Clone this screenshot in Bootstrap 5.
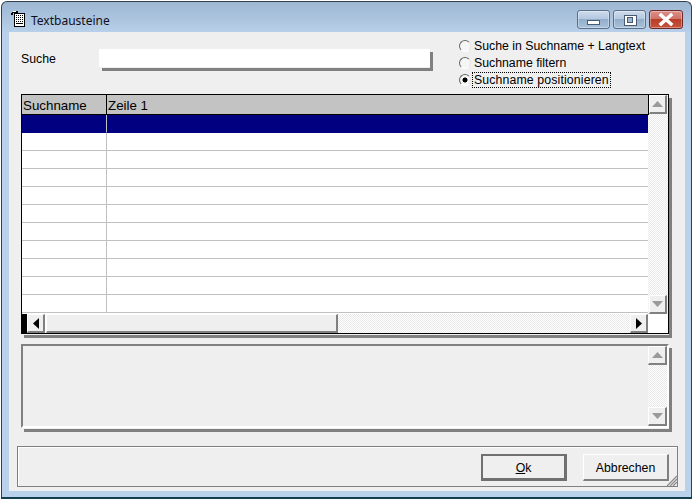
<!DOCTYPE html>
<html lang="de">
<head>
<meta charset="utf-8">
<title>Textbausteine</title>
<link rel="stylesheet" href="https://cdn.jsdelivr.net/npm/bootstrap@5.3.0/dist/css/bootstrap.min.css">
<style>
html,body{margin:0;padding:0;background:#fff;overflow:hidden}
body{width:693px;height:500px;font-family:"Liberation Sans",Arial,sans-serif;font-size:12.3px;color:#000;padding:1px 0 0 1px}
.frame-win{width:691px;height:498px;border:1px solid #33404c;border-bottom:2px solid #123f52;border-radius:6px 6px 0 0;background:linear-gradient(#9db6d2 0,#b9d1ea 32px);padding:0 6px 5px 7px}
.title-bar{height:30px;position:relative}
.title-icon{margin-left:2px;margin-top:8px}
.title-text{font-family:"Noto Sans","Open Sans",sans-serif;font-size:12px;color:#10101c;margin-left:6px;margin-top:9px;line-height:20px}
.ctl{height:19px;border:1px solid #5a6f8a;border-radius:3px;margin-top:8px;background:linear-gradient(#cfdcec 0,#b4c8df 45%,#92aecb 50%,#a9c2db 100%);box-shadow:inset 0 0 0 1px rgba(255,255,255,.35)}
.ctl-min{width:33px;margin-left:3px}
.ctl-max{width:33px;margin-left:3px}
.ctl-close{width:34px;margin-left:3px;margin-right:2px;border-color:#6e2a2a;background:linear-gradient(#dc9087 0,#d0736a 45%,#b93d27 50%,#c4553e 100%)}
.client{width:676px;height:459px;background:#efefef}
.top-row{height:62px}
.lbl-search{width:78px;margin-left:12px;margin-top:18px;line-height:19px}
.search-box{width:331px;height:19px;margin-top:17px;padding:0;background:#fff;border:0;border-bottom:1px solid #efefef;border-radius:0;box-shadow:3px 3px 0 #808080;outline:0}
.radio-set{margin-left:29px;margin-top:5px}
.radio-line{height:17px}
.radio-dot{appearance:none;width:12px;height:12px;margin:0 1px 0 0;border-radius:50%;border:1.5px solid;border-color:#666 #e4e4e4 #fff #666;background:#f6f6f6;flex:none}
.radio-dot:checked{background:radial-gradient(circle,#000 0 2.2px,#f6f6f6 2.8px)}
.radio-text{border:1px dotted transparent;padding:0 1px;line-height:14px;white-space:nowrap;margin:0}
.radio-text.has-focus{border-color:#000;letter-spacing:.13px}
.grid-box{margin-left:12px;width:648px;height:240px;border:1px solid #000;background:#fff;box-shadow:0 1px 0 #efefef,3px 4px 0 #808080}
.grid-main{height:219px}
.grid-table-wrap{width:626px;height:219px;overflow:hidden}
.grid-table{width:626px;table-layout:fixed;font-size:13.33px;border-collapse:separate;border-spacing:0}
.grid-table th{height:20px;background:#c3c3c3;font-weight:400;padding:2px 1px 0;border-bottom:1px solid #000;line-height:17px;white-space:nowrap}
.grid-table th:first-child{width:85px;border-right:1px solid #000}
.grid-table td{height:18px;padding:0;border-bottom:1px solid #c0c0c0}
.grid-table td:first-child{border-right:1px solid #c0c0c0}
.grid-table tr.row-sel td{background:#000080;border-bottom-color:#000080}
.dither{background:repeating-conic-gradient(#fff 0 25%,#e9e9e9 0 50%) 0 0/2px 2px}
.vbar{width:20px}
.vbar-head{border-left:1px solid #000;height:20px;flex:none}
.sb-btn{display:flex;align-items:center;justify-content:center;background:#efefef;border:1px solid;border-color:#fff #808080 #808080 #fff;border-width:1px 2px 2px 1px;flex:none}
.vbtn{width:18px;height:19px}
.vbtn-side{margin-left:1px}
.hbar{height:19px}
.hbar-mark{width:5px;background:#000}
.hbtn{width:18px;height:19px}
.h-thumb{width:292px;height:19px;margin-left:1px;background:#efefef;border:1px solid;border-color:#fff #808080 #808080 #fff;border-width:1px 2px 2px 1px}
.h-corner{width:20px;background:#fff}
.memo-box{margin-left:12px;margin-top:10px;width:648px;height:84px;border:2px solid;border-color:#808080 #fff #fff #808080;background:#efefef;box-shadow:0 1px 0 #efefef,3px 4px 0 #808080}
.memo-bar{width:19px}
.foot-panel{margin-left:8px;margin-top:18px;width:661px;height:41px;border:1px solid #808080;box-shadow:inset 1px 1px 0 #fff;padding:7px 8px 0 0;position:relative}
.act-btn{width:86px;height:27px;padding:2px 0 0;border-radius:0;font-size:12.3px;color:#000;background:#efefef;line-height:1}
.act-ok{border:2px solid #707070;border-right-width:3px;border-bottom-width:3px}
.act-cancel{border:1px solid;border-color:#fff #808080 #808080 #fff;border-width:1px 2px 2px 1px}
.act-btn:hover{background:#efefef;color:#000}
.grip{position:absolute;right:-1px;bottom:-1px}
</style>
</head>
<body>
<div class="frame-win">
  <div class="title-bar d-flex align-items-start">
    <svg class="title-icon" width="14" height="17" viewBox="0 0 14 17" shape-rendering="crispEdges">
      <rect x="3" y="3" width="10" height="13" fill="#fff" stroke="#000"/>
      <path d="M1 2h5v1H1zM0 3h2v2H0zM5 1h2v2H5z" fill="#000"/>
      <path d="M2 1h3v1H2z" fill="#fff"/>
      <path d="M5 5h1v1H5zM7 5h1v1H7zM9 5h1v1H9zM11 5h1v1h-1zM5 7h1v1H5zM7 7h1v1H7zM9 7h1v1H9zM11 7h1v1h-1zM5 9h1v1H5zM7 9h1v1H7zM9 9h1v1H9zM11 9h1v1h-1zM5 11h1v1H5zM7 11h1v1H7zM9 11h1v1H9zM11 11h1v1h-1zM5 13h7v1H5z" fill="#000"/>
    </svg>
    <div class="title-text flex-grow-1">Textbausteine</div>
    <div class="ctl ctl-min d-flex justify-content-center">
      <svg width="15" height="8" viewBox="0 0 15 8" style="margin-top:8px" shape-rendering="crispEdges"><rect x="1.500" y="1.500" width="12" height="4" fill="#fff" stroke="#4a5a70"/></svg>
    </div>
    <div class="ctl ctl-max d-flex justify-content-center align-items-center">
      <svg width="14" height="12" viewBox="0 0 14 12" shape-rendering="crispEdges"><rect x="1" y="1" width="12" height="10" fill="#fff" stroke="#4a5a70"/><rect x="4.500" y="3.500" width="5" height="5" fill="#9fb6d0" stroke="#4a5a70"/></svg>
    </div>
    <div class="ctl ctl-close d-flex justify-content-center align-items-center">
      <svg width="16" height="13" viewBox="0 0 16 13"><path d="M3 2 13 11M13 2 3 11" stroke="#fff" stroke-width="3.400" stroke-linecap="square" fill="none"/></svg>
    </div>
  </div>
  <div class="client">
    <div class="top-row d-flex align-items-start">
      <label class="lbl-search" for="sb">Suche</label>
      <input id="sb" class="search-box" type="text">
      <div class="radio-set">
        <div class="radio-line d-flex align-items-center"><input class="radio-dot" type="radio" name="m" id="r1"><label class="radio-text" for="r1">Suche in Suchname + Langtext</label></div>
        <div class="radio-line d-flex align-items-center"><input class="radio-dot" type="radio" name="m" id="r2"><label class="radio-text" for="r2">Suchname filtern</label></div>
        <div class="radio-line d-flex align-items-center"><input class="radio-dot" type="radio" name="m" id="r3" checked><label class="radio-text has-focus" for="r3">Suchname positionieren</label></div>
      </div>
    </div>
    <div class="grid-box">
      <div class="grid-main d-flex">
        <div class="grid-table-wrap">
          <table class="grid-table">
            <thead><tr><th>Suchname</th><th>Zeile 1</th></tr></thead>
            <tbody>
              <tr class="row-sel"><td></td><td></td></tr>
              <tr><td></td><td></td></tr><tr><td></td><td></td></tr><tr><td></td><td></td></tr><tr><td></td><td></td></tr><tr><td></td><td></td></tr>
              <tr><td></td><td></td></tr><tr><td></td><td></td></tr><tr><td></td><td></td></tr><tr><td></td><td></td></tr><tr><td></td><td></td></tr>
            </tbody>
          </table>
        </div>
        <div class="vbar dither d-flex flex-column justify-content-between">
          <div class="vbar-head"><div class="sb-btn vbtn"><svg width="11" height="6" viewBox="0 0 11 6"><path d="M5.500 0 11 6H0z" fill="#9a9a9a"/></svg></div></div>
          <div class="sb-btn vbtn vbtn-side"><svg width="11" height="6" viewBox="0 0 11 6"><path d="M0 0h11L5.500 6z" fill="#9a9a9a"/></svg></div>
        </div>
      </div>
      <div class="hbar d-flex">
        <div class="hbar-mark"></div>
        <div class="sb-btn hbtn"><svg width="6" height="11" viewBox="0 0 6 11"><path d="M6 0v11L0 5.500z" fill="#000"/></svg></div>
        <div class="h-thumb"></div>
        <div class="dither flex-grow-1"></div>
        <div class="sb-btn hbtn"><svg width="6" height="11" viewBox="0 0 6 11"><path d="M0 0v11l6-5.500z" fill="#000"/></svg></div>
        <div class="h-corner"></div>
      </div>
    </div>
    <div class="memo-box d-flex justify-content-end">
      <div class="memo-bar dither d-flex flex-column justify-content-between">
        <div class="sb-btn vbtn w-100"><svg width="11" height="6" viewBox="0 0 11 6"><path d="M5.500 0 11 6H0z" fill="#9a9a9a"/></svg></div>
        <div class="sb-btn vbtn w-100"><svg width="11" height="6" viewBox="0 0 11 6"><path d="M0 0h11L5.500 6z" fill="#9a9a9a"/></svg></div>
      </div>
    </div>
    <div class="foot-panel d-flex justify-content-end gap-3">
      <button type="button" class="btn act-btn act-ok"><u>O</u>k</button>
      <button type="button" class="btn act-btn act-cancel">Abbrechen</button>
      <svg class="grip" width="12" height="12" viewBox="0 0 12 12"><path d="M11 1 1 11M11 4 4 11M11 7 7 11" stroke="#8a8a8a" stroke-width="1.200" fill="none"/></svg>
    </div>
  </div>
</div>
<script src="https://cdn.jsdelivr.net/npm/bootstrap@5.3.0/dist/js/bootstrap.bundle.min.js"></script>
</body>
</html>
